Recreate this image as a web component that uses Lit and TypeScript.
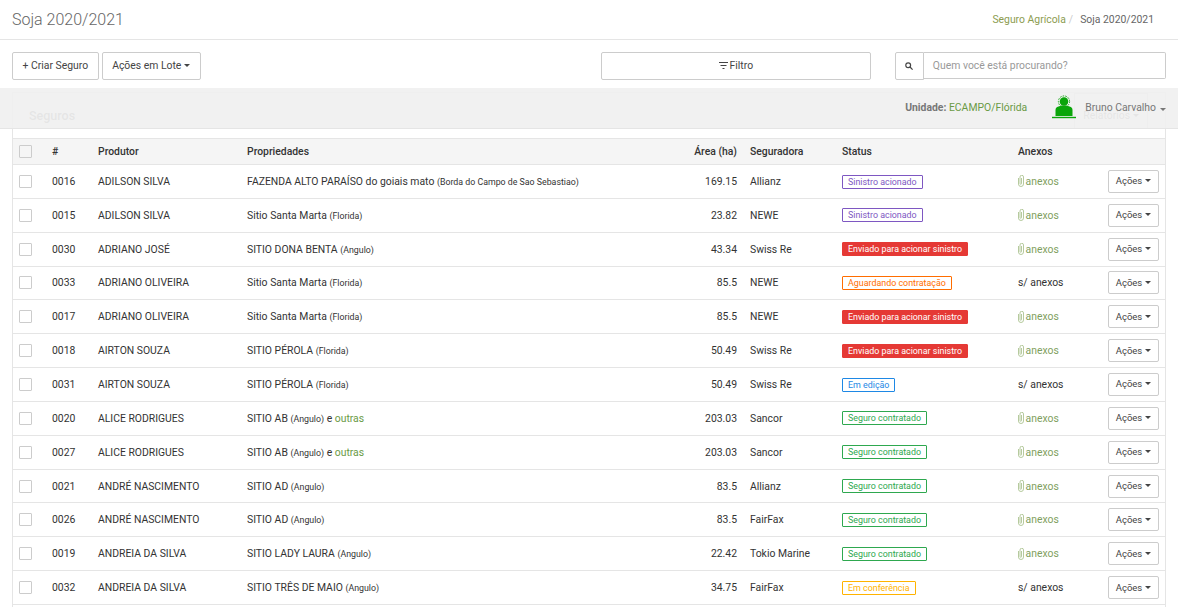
import { LitElement, html, css, nothing } from 'lit';
import { customElement } from 'lit/decorators.js';
import { classMap } from 'lit/directives/class-map.js';

type Row = {
  id: string;
  name: string;
  prop: string;
  place?: string;
  more?: boolean;
  area: string;
  ins: string;
  status: string;
  kind: string;
  files: boolean;
};

const SIN = 'Sinistro acionado';
const ENV = 'Enviado para acionar sinistro';
const CON = 'Seguro contratado';

const rows: Row[] = [
  { id: '0016', name: 'ADILSON SILVA', prop: 'FAZENDA ALTO PARAÍSO do goiais mato', place: 'Borda do Campo de Sao Sebastiao', area: '169.15', ins: 'Allianz', status: SIN, kind: 'purple', files: true },
  { id: '0015', name: 'ADILSON SILVA', prop: 'Sitio Santa Marta', place: 'Florida', area: '23.82', ins: 'NEWE', status: SIN, kind: 'purple', files: true },
  { id: '0030', name: 'ADRIANO JOSÉ', prop: 'SITIO DONA BENTA', place: 'Angulo', area: '43.34', ins: 'Swiss Re', status: ENV, kind: 'red', files: true },
  { id: '0033', name: 'ADRIANO OLIVEIRA', prop: 'Sitio Santa Marta', place: 'Florida', area: '85.5', ins: 'NEWE', status: 'Aguardando contratação', kind: 'orange', files: false },
  { id: '0017', name: 'ADRIANO OLIVEIRA', prop: 'Sitio Santa Marta', place: 'Florida', area: '85.5', ins: 'NEWE', status: ENV, kind: 'red', files: true },
  { id: '0018', name: 'AIRTON SOUZA', prop: 'SITIO PÉROLA', place: 'Florida', area: '50.49', ins: 'Swiss Re', status: ENV, kind: 'red', files: true },
  { id: '0031', name: 'AIRTON SOUZA', prop: 'SITIO PÉROLA', place: 'Florida', area: '50.49', ins: 'Swiss Re', status: 'Em edição', kind: 'blue', files: false },
  { id: '0020', name: 'ALICE RODRIGUES', prop: 'SITIO AB', place: 'Angulo', more: true, area: '203.03', ins: 'Sancor', status: CON, kind: 'green', files: true },
  { id: '0027', name: 'ALICE RODRIGUES', prop: 'SITIO AB', place: 'Angulo', more: true, area: '203.03', ins: 'Sancor', status: CON, kind: 'green', files: true },
  { id: '0021', name: 'ANDRÉ NASCIMENTO', prop: 'SITIO AD', place: 'Angulo', area: '83.5', ins: 'Allianz', status: CON, kind: 'green', files: true },
  { id: '0026', name: 'ANDRÉ NASCIMENTO', prop: 'SITIO AD', place: 'Angulo', area: '83.5', ins: 'FairFax', status: CON, kind: 'green', files: true },
  { id: '0019', name: 'ANDREIA DA SILVA', prop: 'SITIO LADY LAURA', place: 'Angulo', area: '22.42', ins: 'Tokio Marine', status: CON, kind: 'green', files: true },
  { id: '0032', name: 'ANDREIA DA SILVA', prop: 'SITIO TRÊS DE MAIO', place: 'Angulo', area: '34.75', ins: 'FairFax', status: 'Em conferência', kind: 'amber', files: false },
];

const clip = html`<svg class="clip" viewBox="0 0 12 24" width="6" height="12" fill="none" stroke="currentColor" stroke-width="1.6">
  <path d="M1 6v12a5 5 0 0 0 10 0V4a3.5 3.5 0 0 0-7 0v13a1.5 1.5 0 0 0 3 0V6"></path>
</svg>`;

@customElement('app-root')
export default class AppRoot extends LitElement {
  static styles = css`
    :host {
      display: block;
      position: relative;
      height: 607px;
      overflow: hidden;
      background: #fff;
      color: #333;
      font-family: Roboto, 'Liberation Sans', sans-serif;
      font-size: 10.4px;
    }

    a {
      color: #6a9a45;
      text-decoration: none;
    }

    .top {
      display: flex;
      align-items: center;
      justify-content: space-between;
      height: 39px;
      padding: 0 24px 0 12px;
      border-bottom: 1px solid #e5e5e5;
    }

    .title {
      font-size: 16px;
      font-weight: 300;
      color: #666;
    }

    .crumbs {
      font-size: 10.4px;
      color: #666;
    }

    .crumbs a {
      color: #8c9c50;
    }

    .crumbs span {
      margin: 0 4.5px 0 3px;
      color: #ccc;
    }

    .tools {
      display: flex;
      align-items: flex-start;
      height: 48px;
      padding: 12px 12px 0;
      box-sizing: border-box;
    }

    .btn {
      display: inline-flex;
      align-items: center;
      justify-content: center;
      box-sizing: border-box;
      height: 28px;
      padding: 0 9.5px 1px;
      border: 1px solid #ccc;
      border-radius: 2px;
      background: #fff;
      color: #444;
      font: inherit;
      white-space: nowrap;
    }

    .btn + .btn {
      margin-left: 3px;
    }

    .caret {
      display: inline-block;
      width: 0;
      height: 0;
      margin-left: 3px;
      border-top: 3px solid currentColor;
      border-left: 3px solid transparent;
      border-right: 3px solid transparent;
    }

    .btn.filter {
      width: 270px;
      margin-left: 400px;
    }

    .filter svg {
      margin-right: 2px;
    }

    .search {
      display: flex;
      width: 271px;
      height: 27px;
      margin-left: 24px;
    }

    .search i {
      display: flex;
      align-items: center;
      justify-content: center;
      box-sizing: border-box;
      width: 29px;
      height: 28px;
      border: 1px solid #ccc;
      border-radius: 2px 0 0 2px;
    }

    .search div {
      flex: 1;
      padding-left: 9px;
      line-height: 25px;
      border: 1px solid #ccc;
      border-left: 0;
      border-radius: 0 2px 2px 0;
      color: #999;
    }

    .card {
      margin: 4px 12px 0;
      height: 600px;
      border: 1px solid #e5e5e5;
      border-bottom: 0;
    }

    .card-head {
      display: flex;
      align-items: center;
      justify-content: space-between;
      box-sizing: border-box;
      height: 45px;
      padding: 0 17px 0 16px;
      font-size: 12.5px;
      font-weight: 500;
      color: #555;
    }

    .card-head .ghost {
      display: flex;
      align-items: center;
      align-self: flex-start;
      box-sizing: border-box;
      height: 36px;
      padding: 9px 8px 0;
      font-size: 10.4px;
      font-weight: 400;
      border: 1px solid #ccc;
    }

    /* translucent bar that covers the card head */
    .bar {
      position: absolute;
      top: 88px;
      left: 0;
      right: 0;
      display: flex;
      align-items: center;
      justify-content: flex-end;
      box-sizing: border-box;
      height: 41px;
      padding: 0 12px 2px 0;
      background: rgba(240, 240, 240, 0.93);
      border-bottom: 1px solid #e5e5e5;
      color: #777;
    }

    .bar b {
      font-weight: 700;
    }

    .unit {
      margin-right: 25px;
    }

    .user {
      margin-left: 9px;
      font-size: 10.4px;
    }

    .user .caret {
      margin-left: 4px;
    }

    table {
      width: 1152px;
      border-collapse: collapse;
      table-layout: fixed;
    }

    th {
      height: 25px;
      padding: 0 6px;
      background: #f5f5f5;
      border-top: 1px solid #e5e5e5;
      border-bottom: 1px solid #e5e5e5;
      color: #333;
      font-weight: 500;
      font-size: 10.4px;
      text-align: left;
      white-space: nowrap;
    }

    td {
      height: 32.85px;
      padding: 0 6px;
      border-bottom: 1px solid #e5e5e5;
      color: #333;
      white-space: nowrap;
    }

    th.num,
    td.num {
      padding-right: 7px;
      text-align: right;
    }

    small {
      font-size: 8.8px;
    }

    .box {
      display: block;
      box-sizing: border-box;
      width: 13px;
      height: 13px;
      border: 1px solid #ccc;
      border-radius: 1px;
    }

    .tag {
      display: inline-block;
      box-sizing: border-box;
      height: 14px;
      padding: 0 5px;
      border: 1px solid;
      border-radius: 1px;
      font-size: 8.9px;
      line-height: 12px;
      vertical-align: middle;
    }

    .purple { color: #7e57c2; }
    .orange { color: #ff6d00; }
    .blue { color: #1e88e5; }
    .green { color: #2ea84f; }
    .amber { color: #ffb300; }
    .red {
      color: #fff;
      background: #e53935;
      border-color: #e53935;
    }

    .files {
      color: #7f9f60;
    }

    .clip {
      vertical-align: -2.5px;
      margin-right: 1.5px;
      color: #a3bd85;
    }

    .act {
      width: 51px;
      height: 23px;
      padding: 0 0 1px;
      font-size: 9.5px;
    }
  `;

  render() {
    return html`
      <header class="top">
        <div class="title">Soja 2020/2021</div>
        <div class="crumbs"><a href="#">Seguro Agrícola</a><span>/</span> Soja 2020/2021</div>
      </header>

      <div class="tools">
        <button class="btn">+ Criar Seguro</button>
        <button class="btn">Ações em Lote <i class="caret"></i></button>
        <button class="btn filter">
          <svg width="9" height="7" viewBox="0 0 9 7" fill="none" stroke="currentColor"><path d="M0 .5h9M1.5 3.5h6M3.5 6.5h2"></path></svg>
          Filtro
        </button>
        <div class="search">
          <i>
            <svg width="8" height="8" viewBox="0 0 8 8" fill="none" stroke="#444" stroke-width="1.2"><circle cx="3.2" cy="3.2" r="2.4"></circle><path d="M5 5l2.6 2.6"></path></svg>
          </i>
          <div>Quem você está procurando?</div>
        </div>
      </div>

      <section class="card">
        <div class="card-head">
          <span>Seguros</span>
          <span class="ghost">Relatórios <i class="caret"></i></span>
        </div>
        <table>
          <colgroup>
            <col style="width:33px" />
            <col style="width:46px" />
            <col style="width:149px" />
            <col />
            <col style="width:56px" />
            <col style="width:92px" />
            <col style="width:176px" />
            <col style="width:90px" />
            <col style="width:63px" />
          </colgroup>
          <thead>
            <tr>
              <th><span class="box"></span></th>
              <th>#</th>
              <th>Produtor</th>
              <th>Propriedades</th>
              <th class="num">Área (ha)</th>
              <th>Seguradora</th>
              <th>Status</th>
              <th>Anexos</th>
              <th></th>
            </tr>
          </thead>
          <tbody>
            ${rows.map(
              (r) => html`<tr>
                <td><span class="box"></span></td>
                <td>${r.id}</td>
                <td>${r.name}</td>
                <td>
                  ${r.prop} <small>(${r.place})</small>
                  ${r.more ? html`e <a href="#">outras</a>` : nothing}
                </td>
                <td class="num">${r.area}</td>
                <td>${r.ins}</td>
                <td><span class=${classMap({ tag: true, [r.kind]: true })}>${r.status}</span></td>
                <td>${r.files ? html`<a class="files" href="#">${clip}anexos</a>` : 's/ anexos'}</td>
                <td><button class="btn act">Ações <i class="caret"></i></button></td>
              </tr>`,
            )}
          </tbody>
        </table>
      </section>

      <div class="bar">
        <span class="unit"><b>Unidade:</b> <a href="#">ECAMPO/Flórida</a></span>
        <svg width="24" height="24" viewBox="0 0 24 24" fill="#0aa50a">
          <circle cx="12" cy="6.5" r="4.3"></circle>
          <circle cx="12" cy="6.5" r="5.6" fill="none" stroke="#0aa50a" stroke-width="0.9" stroke-dasharray="1.6 1.1"></circle>
          <path d="M3.5 21v-6q0-3 3-3.5l3-1h5l3 1q3 .5 3 3.5v6z"></path>
          <rect x="0" y="21.8" width="24" height="1.4"></rect>
        </svg>
        <span class="user">Bruno Carvalho<i class="caret"></i></span>
      </div>
    `;
  }
}
